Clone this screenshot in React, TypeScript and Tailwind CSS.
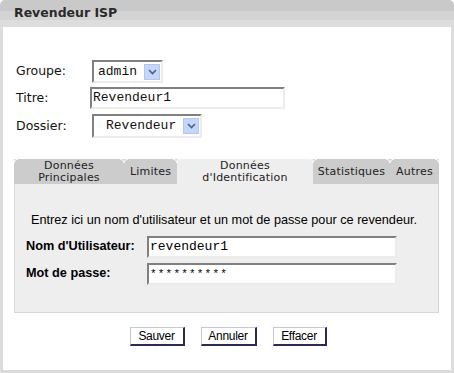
import React from 'react';

const mono = { fontFamily: '"Liberation Mono", "Courier New", monospace' };

const Arrow = () => (
  <div className="w-[16px] h-[16px] bg-[#c5d5fb] border border-[#b4c6ef] flex items-center justify-center">
    <svg width="9" height="6" viewBox="0 0 9 6">
      <path d="M1 1 L4.5 4.5 L8 1" stroke="#4d6185" strokeWidth="1.6" fill="none" />
    </svg>
  </div>
);

const Tab = ({ label, active, w }: { label: React.ReactNode; active?: boolean; w: string }) => (
  <div
    className={`${w} h-full flex items-center justify-center text-center leading-[12px] text-[11px] text-[#222] tracking-[0.2px] relative ${
      active ? 'bg-[#eeeeee]' : 'bg-[#cccccc]'
    }`}
  >
    <div className="absolute left-0 top-0 w-[4px] h-[4px] border-l border-t border-[#f4f4f4] rounded-tl-[3px]" />
    <div className="absolute right-0 top-0 w-[4px] h-[4px] border-r border-t border-[#f4f4f4] rounded-tr-[3px]" />
    {label}
  </div>
);

const Btn = ({ label, w }: { label: string; w: string }) => (
  <div
    className={`${w} h-[19px] bg-white border border-t-[#c8c8d0] border-l-[#c8c8d0] border-r-[#2a2a55] border-b-[#2a2a55] border-r-2 border-b-2 flex items-center justify-center text-[12px] text-black tracking-[-0.3px]`}
    style={{ fontFamily: '"Liberation Sans Narrow", "Liberation Sans", Arial, sans-serif' }}
  >
    {label}
  </div>
);

export default function App() {
  return (
    <div className="w-[454px] h-[373px] bg-white flex flex-col" style={{ fontFamily: '"DejaVu Sans", Verdana, sans-serif' }}>
      {/* Title bar */}
      <div className="h-[27px] rounded-t-[5px] overflow-hidden flex flex-col relative">
        <div className="h-[11px] bg-[#c9c9c9]" />
        <div className="h-[9px] bg-[#d4d4d4]" />
        <div className="h-[7px] bg-[#dddddd]" />
        <div className="absolute left-[14px] top-[5px] text-[12.5px] font-bold text-[#2a2a2a] leading-[16px]">Revendeur ISP</div>
      </div>

      {/* Body */}
      <div className="flex-1 border-l-[3px] border-r-[3px] border-b-[3px] border-[#dcdcdc] flex flex-col">
        <div className="pt-[33px] pl-[13px] flex flex-col text-[12.5px] text-[#111]">
          <div className="flex items-center h-[23px]">
            <div className="w-[76px]">Groupe:</div>
            <div className="w-[71px] h-[23px] flex items-center border-2 border-t-[#808080] border-l-[#808080] border-r-[#ececec] border-b-[#ececec] bg-white">
              <span className="flex-1 pl-[4px] text-[13px]" style={mono}>admin</span>
              <div className="mr-[1px]"><Arrow /></div>
            </div>
          </div>
          <div className="flex items-center h-[22px] mt-[4px]">
            <div className="w-[74px]">Titre:</div>
            <div className="w-[195px] h-[22px] flex items-center border-2 border-t-[#808080] border-l-[#808080] border-r-[#ececec] border-b-[#ececec] bg-white">
              <span className="pl-[1px] text-[13px]" style={mono}>Revendeur1</span>
            </div>
          </div>
          <div className="flex items-center h-[24px] mt-[5px]">
            <div className="w-[76px]">Dossier:</div>
            <div className="w-[110px] h-[24px] flex items-center border-2 border-t-[#808080] border-l-[#808080] border-r-[#ececec] border-b-[#ececec] bg-white">
              <span className="flex-1 pl-[12px] text-[13px]" style={mono}>Revendeur</span>
              <div className="mr-[1px]"><Arrow /></div>
            </div>
          </div>
        </div>

        {/* Tabs */}
        <div className="mt-[21px] ml-[11px] mr-[12px] flex flex-col">
          <div className="h-[25px] flex">
            <Tab w="w-[110px]" label={<span>Données<br />Principales</span>} />
            <Tab w="w-[53px]" label="Limites" />
            <Tab w="w-[136px]" active label={<span>Données<br />d'Identification</span>} />
            <Tab w="w-[77px]" label="Statistiques" />
            <Tab w="w-[49px]" label="Autres" />
          </div>
          <div
            className="h-[129px] bg-[#eeeeee] border border-t-0 border-[#d6d6d6] pt-[29px] pl-[11px] text-[12.7px] text-black"
            style={{ fontFamily: '"Liberation Sans", Arial, sans-serif' }}
          >
            <div className="pl-[5px] leading-[14px]">Entrez ici un nom d'utilisateur et un mot de passe pour ce revendeur.</div>
            <div className="flex items-center mt-[9px] h-[22px]">
              <div className="w-[121px] font-bold">Nom d'Utilisateur:</div>
              <div className="w-[250px] h-[22px] flex items-center border-2 border-t-[#808080] border-l-[#808080] border-r-[#ececec] border-b-[#ececec] bg-white">
                <span className="pl-[1px] text-[13px]" style={mono}>revendeur1</span>
              </div>
            </div>
            <div className="flex items-center mt-[5px] h-[22px]">
              <div className="w-[121px] font-bold">Mot de passe:</div>
              <div className="w-[250px] h-[22px] flex items-center border-2 border-t-[#808080] border-l-[#808080] border-r-[#ececec] border-b-[#ececec] bg-white">
                <span className="pl-[1px] text-[11px] tracking-[1.2px]" style={mono}>**********</span>
              </div>
            </div>
          </div>
        </div>

        {/* Buttons */}
        <div className="mt-[14px] flex justify-center gap-[16px] pl-[2px]">
          <Btn w="w-[55px]" label="Sauver" />
          <Btn w="w-[56px]" label="Annuler" />
          <Btn w="w-[54px]" label="Effacer" />
        </div>
      </div>
    </div>
  );
}
